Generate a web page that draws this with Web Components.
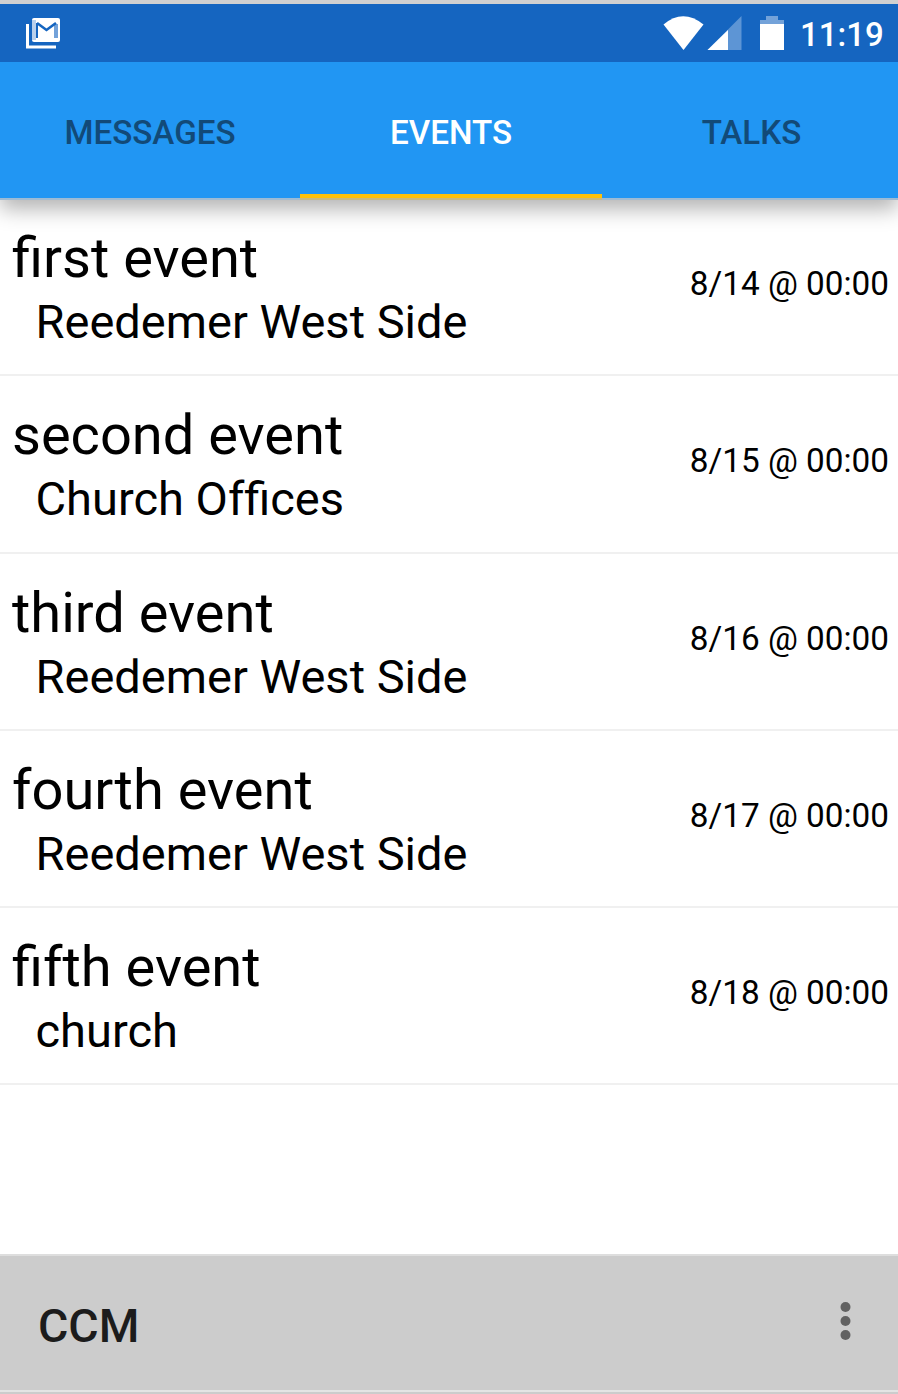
<!DOCTYPE html>
<html lang="en">
<head>
<meta charset="utf-8">
<title>CCM</title>
<style>
html,body{margin:0;height:100%;background:#fff}
body{font-family:Roboto,"Liberation Sans",sans-serif;color:#000;overflow:hidden}
</style>
</head>
<body>
<ccm-app></ccm-app>
<script>
const define = (name, html) => customElements.define(name, class extends HTMLElement {
  constructor() {
    super();
    const t = document.createElement('template');
    t.innerHTML = html;
    this.attachShadow({mode: 'open'}).append(t.content.cloneNode(true));
  }
});

define('status-bar', `
<style>
:host{display:flex;box-sizing:border-box;height:62px;border-top:4px solid #d0d0d0;background:#1565c0;color:#fff;align-items:flex-start;padding:0 15px 0 26px;position:relative;z-index:2}
svg{display:block}
.mail{margin-top:14px}
.radio{margin:12px 0 0 auto}
span{font-size:33px;font-weight:500;line-height:40px;margin:11px 0 0 16px;white-space:nowrap;width:83px}
</style>
<svg class="mail" width="35" height="31" viewBox="0 0 35 31">
  <path d="M1.500 6v23h28.500" fill="none" stroke="#fff" stroke-width="3"/>
  <rect x="6" y="0" width="28" height="24" rx="2" fill="#fff"/>
  <rect x="6" y="2" width="4" height="20" fill="#b9d0ec"/>
  <rect x="28" y="6" width="4" height="14" fill="#73a2d9"/>
  <path d="M11 20V5" fill="none" stroke="#1565c0" stroke-width="2"/>
  <path d="M11 5L20.500 12L30 5" fill="none" stroke="#1565c0" stroke-width="2.600"/>
</svg>
<svg class="radio" width="121" height="36" viewBox="0 0 121 36">
  <path d="M0.500 8.500Q20 -8 40.500 8.500L20.500 34Z" fill="#fff"/>
  <path d="M44.500 34L78.500 0V34Z" fill="#5d95d5"/>
  <path d="M44.500 34L65 14V34Z" fill="#fff"/>
  <path d="M97 8V4h6V0h12v4h6v4z" fill="#73a2d9"/>
  <rect x="97" y="8" width="24" height="26" fill="#fff"/>
</svg>
<span><slot></slot></span>`);

define('tab-bar', `
<style>
:host{display:grid;grid-template-columns:300px 302px 1fr;height:134px;padding-top:2px;margin-bottom:-2px;background:#2196f3;border-bottom:2px solid #9dbbd4;box-shadow:0 9px 20px rgba(0,0,0,.3);position:relative;z-index:1}
</style><slot></slot>`);

define('tab-item', `
<style>
:host{display:flex;box-sizing:border-box;height:134px;align-items:center;justify-content:center;padding-top:4px;font-size:33.200px;font-weight:500;line-height:40px;color:#124a78}
:host(:last-of-type){padding-left:3px}
:host([selected]){color:#fff;border-bottom:4px solid #ffc107;box-shadow:0 2px #ccb97a;padding-top:8px}
</style><slot></slot>`);

define('event-row', `
<style>
:host{display:flex;box-sizing:border-box;height:177.300px;border-bottom:2px solid #f0f0f0;justify-content:space-between;align-items:center;padding:0 9px 0 12px}
.title{font-size:56px;line-height:66px}
.text{padding-top:2px}
.place{font-size:47px;line-height:56px;margin:3px 0 0 23.500px}
.when{font-size:33.300px;line-height:40px;margin-top:-5px}
div{white-space:nowrap}
</style>
<div class="text"><div class="title"><slot name="title"></slot></div><div class="place"><slot name="place"></slot></div></div>
<div class="when"><slot></slot></div>`);

define('bottom-bar', `
<style>
:host{display:flex;box-sizing:border-box;background:#ccc;border-top:2px solid #dedede;justify-content:space-between;align-items:flex-start;padding:0 47px 0 38px;flex:none}
h1{margin:42px 0 0;font-size:46.500px;font-weight:500;line-height:56px;color:#1c1c1c}
svg{display:block;margin-top:46px}
</style>
<h1><slot></slot></h1>
<svg width="11" height="40" viewBox="0 0 11 40" fill="#616161"><circle cx="5.500" cy="5" r="5"/><circle cx="5.500" cy="19" r="5"/><circle cx="5.500" cy="33" r="5"/></svg>`);

define('ccm-app', `
<style>
:host{display:flex;flex-direction:column;height:1394px;background:#fff}
.edge{height:4px;box-sizing:border-box;flex:none;background:#ccc;border-top:2px solid #e4e4e4}
status-bar,tab-bar{flex:none}
main{padding-top:1px}
bottom-bar{height:136px;margin-top:auto}
.f{display:inline-block}
</style>
<status-bar>11:19</status-bar>
<tab-bar><tab-item>MESSAGES</tab-item><tab-item selected>EVENTS</tab-item><tab-item>TALKS</tab-item></tab-bar>
<main>
<event-row><span slot="title">first event</span><span slot="place">Reedemer West Side</span>8/14 @ 00:00</event-row>
<event-row><span slot="title">second event</span><span slot="place">Church O<span class="f">f</span>fices</span>8/15 @ 00:00</event-row>
<event-row><span slot="title">third event</span><span slot="place">Reedemer West Side</span>8/16 @ 00:00</event-row>
<event-row><span slot="title">fourth event</span><span slot="place">Reedemer West Side</span>8/17 @ 00:00</event-row>
<event-row><span slot="title">fifth event</span><span slot="place">church</span>8/18 @ 00:00</event-row>
</main>
<bottom-bar>CCM</bottom-bar>
<div class="edge"></div>`);
</script>
</body>
</html>
